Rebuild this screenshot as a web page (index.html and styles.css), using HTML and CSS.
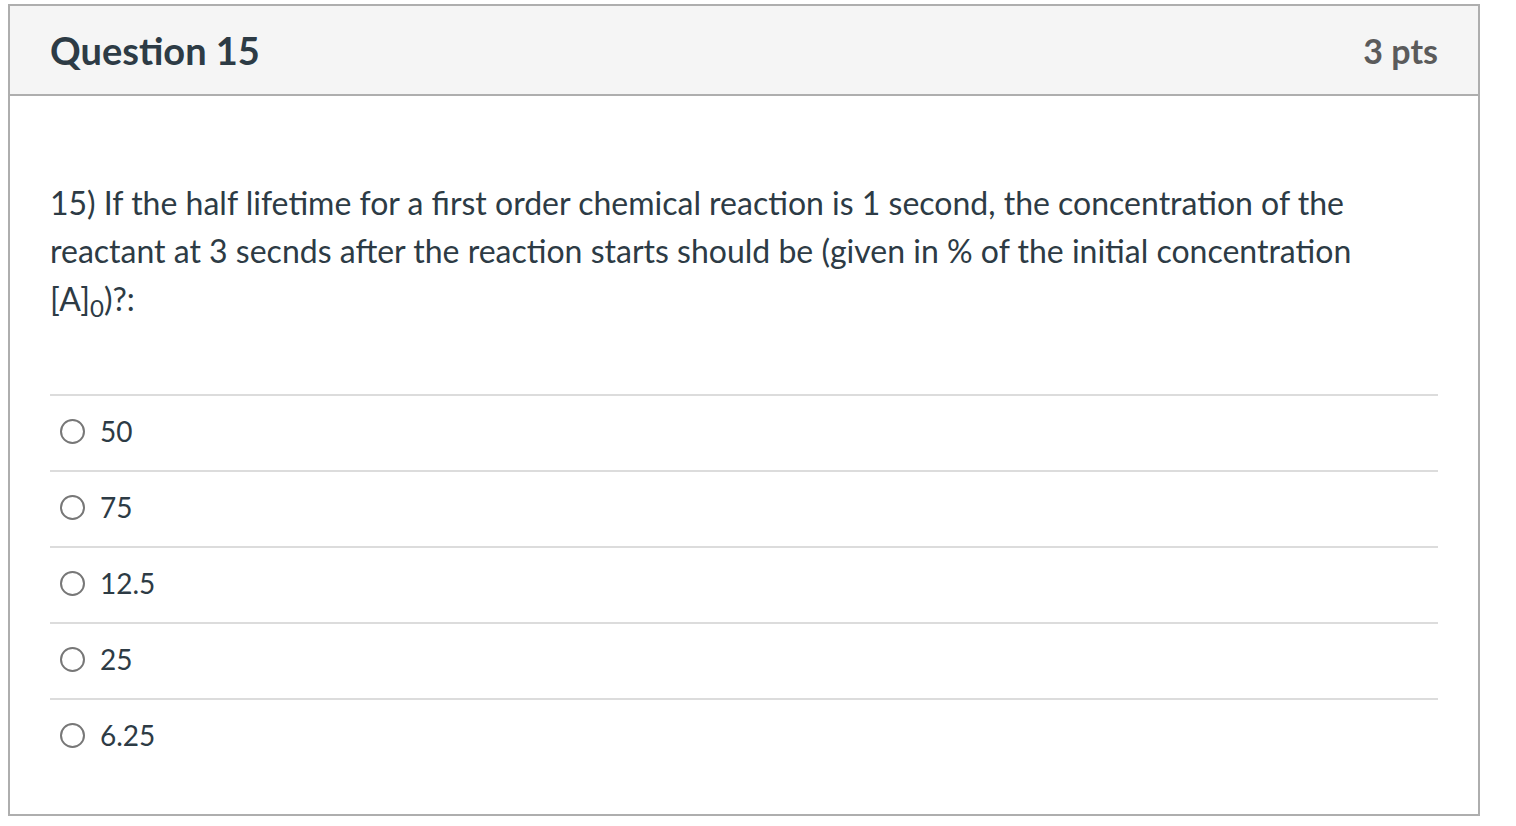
FILE: index.html
```html
<!DOCTYPE html>
<html>
<head>
<meta charset="utf-8">
<link rel="stylesheet" href="styles.css">
</head>
<body>
<div class="card">
  <div class="header">
    <h2 class="title">Question 15</h2>
    <div class="pts">3 pts</div>
  </div>
  <div class="body">
    <p class="text">15) If the half lifetime for a first order chemical reaction is 1 second, the concentration of the reactant at 3 secnds after the reaction starts should be (given in % of the initial concentration [A]<sub>0</sub>)?:</p>
    <div class="answers">
      <label class="answer"><span class="radio"></span><span class="label">50</span></label>
      <label class="answer"><span class="radio"></span><span class="label">75</span></label>
      <label class="answer"><span class="radio"></span><span class="label">12.5</span></label>
      <label class="answer"><span class="radio"></span><span class="label">25</span></label>
      <label class="answer"><span class="radio"></span><span class="label">6.25</span></label>
    </div>
  </div>
</div>
</body>
</html>
```
FILE: styles.css
```css
html, body {
  margin: 0;
  padding: 0;
  background: #fff;
}
body {
  padding: 4px 0 0 8px;
  font-family: Lato, "Open Sans", sans-serif;
  color: #2d3b45;
}
.card {
  width: 1472px;
  box-sizing: border-box;
  border: 2px solid #aeaeae;
}
.header {
  height: 88px;
  box-sizing: content-box;
  background: #f5f5f5;
  border-bottom: 2px solid #aeaeae;
  padding: 0 40px;
  display: flex;
  align-items: center;
  justify-content: space-between;
}
.title {
  margin: 0;
  font-size: 38px;
  font-weight: 700;
  color: #2d3b45;
}
.pts {
  font-size: 34px;
  font-weight: 700;
  color: #5b5b5b;
}
.body {
  padding: 0 40px 40px;
}
.text {
  margin: 83px 0 0;
  font-size: 32px;
  line-height: 48px;
}
.text sub {
  font-size: 24px;
  line-height: 0;
  vertical-align: -6px;
}
.answers {
  margin-top: 71px;
}
.answer {
  display: flex;
  align-items: center;
  height: 70px;
  padding: 0 0 4px 10px;
  border-top: 2px solid #dcdcdc;
  font-size: 28px;
}
.radio {
  width: 21px;
  height: 21px;
  border: 2px solid #777;
  border-radius: 50%;
  margin-right: 15px;
  flex: none;
}
```
